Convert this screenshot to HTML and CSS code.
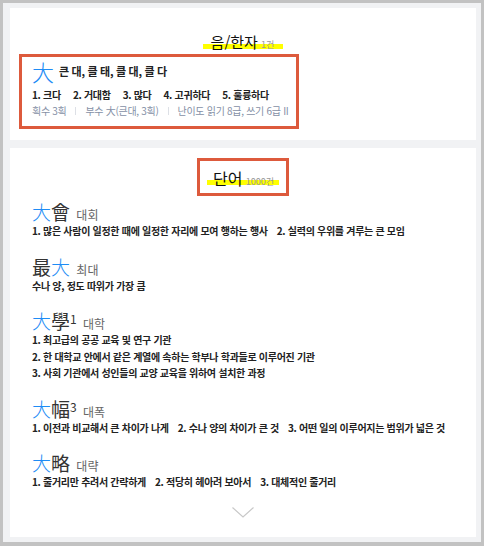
FILE: index.html
```html
<!DOCTYPE html>
<html lang="ko">
<head>
  <meta charset="UTF-8">
  <title>大 - 한자사전</title>
  <link rel="stylesheet" href="styles.css">
</head>
<body>
  <div class="page">
    <!-- 음/한자 -->
    <section class="panel panel-hanja">
      <div class="panel-head">
        <h2 class="title">음/한자 <span class="count">1건</span></h2>
      </div>
      <div class="hanja-box">
        <div class="hanja-main">
          <span class="hanja-char">大</span>
          <span class="hanja-sound">큰 대, 클 태, 클 대, 클 다</span>
        </div>
        <p class="hanja-means">
          <span>1. 크다</span><span>2. 거대함</span><span>3. 많다</span><span>4. 고귀하다</span><span>5. 훌륭하다</span>
        </p>
        <p class="hanja-meta">
          <span>획수 3획</span><span>부수 大(큰대, 3획)</span><span>난이도 읽기 8급, 쓰기 6급 II</span>
        </p>
      </div>
    </section>

    <!-- 단어 -->
    <section class="panel panel-words">
      <div class="panel-head">
        <div class="title-box">
          <h2 class="title">단어 <span class="count">1000건</span></h2>
        </div>
      </div>
      <ul class="word-list">
        <li class="word">
          <div class="word-head"><span class="hl">大</span>會 <span class="read">대회</span></div>
          <p class="def">1. 많은 사람이 일정한 때에 일정한 자리에 모여 행하는 행사<span class="sep"></span>2. 실력의 우위를 겨루는 큰 모임</p>
        </li>
        <li class="word">
          <div class="word-head">最<span class="hl">大</span> <span class="read">최대</span></div>
          <p class="def">수나 양, 정도 따위가 가장 큼</p>
        </li>
        <li class="word">
          <div class="word-head"><span class="hl">大</span>學<sup>1</sup> <span class="read">대학</span></div>
          <p class="def">1. 최고급의 공공 교육 및 연구 기관</p>
          <p class="def">2. 한 대학교 안에서 같은 계열에 속하는 학부나 학과들로 이루어진 기관</p>
          <p class="def">3. 사회 기관에서 성인들의 교양 교육을 위하여 설치한 과정</p>
        </li>
        <li class="word">
          <div class="word-head"><span class="hl">大</span>幅<sup>3</sup> <span class="read">대폭</span></div>
          <p class="def">1. 이전과 비교해서 큰 차이가 나게<span class="sep"></span>2. 수나 양의 차이가 큰 것<span class="sep"></span>3. 어떤 일의 이루어지는 범위가 넓은 것</p>
        </li>
        <li class="word">
          <div class="word-head"><span class="hl">大</span>略 <span class="read">대략</span></div>
          <p class="def">1. 줄거리만 추려서 간략하게<span class="sep"></span>2. 적당히 헤아려 보아서<span class="sep"></span>3. 대체적인 줄거리</p>
        </li>
      </ul>
      <div class="more">
        <svg width="22" height="11" viewBox="0 0 22 11"><path d="M0.5 0.5 L11 10 L21.5 0.5" fill="none" stroke="#c8c8c8" stroke-width="1.2"/></svg>
      </div>
    </section>
  </div>
</body>
</html>
```

FILE: styles.css
```css
* {
  box-sizing: border-box;
  margin: 0;
  padding: 0;
}
body {
  font-family: 'Noto Sans CJK KR', 'Noto Sans', sans-serif;
  background: #c2c2c2;
  color: #222;
  padding: 3px 3px 4px 3px;
  height: 546px;
}
.page {
  background: #f1f2f4;
  padding: 5px 5px 5px 7px;
  height: 100%;
}
.panel {
  background: #fff;
}
.panel-head {
  display: flex;
  justify-content: center;
}
.title {
  display: block;
  font-size: 15px;
  font-weight: 400;
  line-height: 20px;
  height: 20px;
  color: #111;
  padding: 0 9px 0 8px;
  white-space: nowrap;
  background: linear-gradient(transparent 62%, #ffff00 62%, #ffff00 84%, transparent 84%);
}
.count {
  font-size: 9px;
  color: #999;
  margin-left: -1px;
}
/* 음/한자 */
.panel-hanja {
  padding: 24px 0 11px;
  margin-bottom: 8px;
}
.panel-hanja .panel-head {
  margin-bottom: 2px;
}
.hanja-box {
  margin-left: 9px;
  width: 280px;
  height: 75px;
  border: 3px solid #dd5a3c;
  padding: 3px 10px 0;
}
.hanja-main {
  display: flex;
  align-items: center;
  height: 22px;
}
.hanja-char {
  font-size: 22px;
  font-weight: 300;
  color: #1e8cf5;
  line-height: 22px;
  margin-right: 5px;
}
.hanja-sound {
  font-size: 11px;
  font-weight: 700;
  color: #222;
  letter-spacing: -0.3px;
}
.hanja-means {
  display: flex;
  gap: 12px;
  margin-top: 5px;
  font-size: 10px;
  font-weight: 700;
  line-height: 16px;
  white-space: nowrap;
  letter-spacing: -0.3px;
}
.hanja-meta {
  display: flex;
  align-items: center;
  font-size: 10px;
  line-height: 16px;
  color: #8590a6;
  white-space: nowrap;
  letter-spacing: -0.3px;
}
.hanja-meta span + span::before {
  content: "";
  display: inline-block;
  width: 1px;
  height: 8px;
  background: #dde0e6;
  margin: 0 9px;
}
/* 단어 */
.panel-words {
  padding-top: 10px;
  height: 389px;
}
.title-box {
  border: 3px solid #dd5a3c;
  width: 92px;
  height: 38px;
  padding-top: 7px;
  display: flex;
  justify-content: center;
}
.panel-words .title {
  font-size: 16px;
  padding: 0 5px 0 6px;
}
.word-list {
  list-style: none;
  margin: 6px 0 0 22px;
}
.word {
  margin-bottom: 17px;
}
.word-head {
  font-size: 19px;
  line-height: 20px;
  height: 20px;
  color: #333;
  font-weight: 400;
  margin-bottom: 1px;
  white-space: nowrap;
}
.word-head .hl {
  color: #1e8cf5;
  font-weight: 300;
}
.word-head sup {
  font-size: 12px;
  vertical-align: 5px;
  line-height: 0;
}
.read {
  font-size: 12px;
  color: #666;
  font-weight: 400;
  margin-left: 1px;
}
.def {
  font-size: 10px;
  font-weight: 700;
  line-height: 16.5px;
  color: #222;
  letter-spacing: -0.3px;
}
.sep {
  display: inline-block;
  width: 9px;
}
.more {
  display: flex;
  justify-content: center;
  margin-top: -1px;
}
```
